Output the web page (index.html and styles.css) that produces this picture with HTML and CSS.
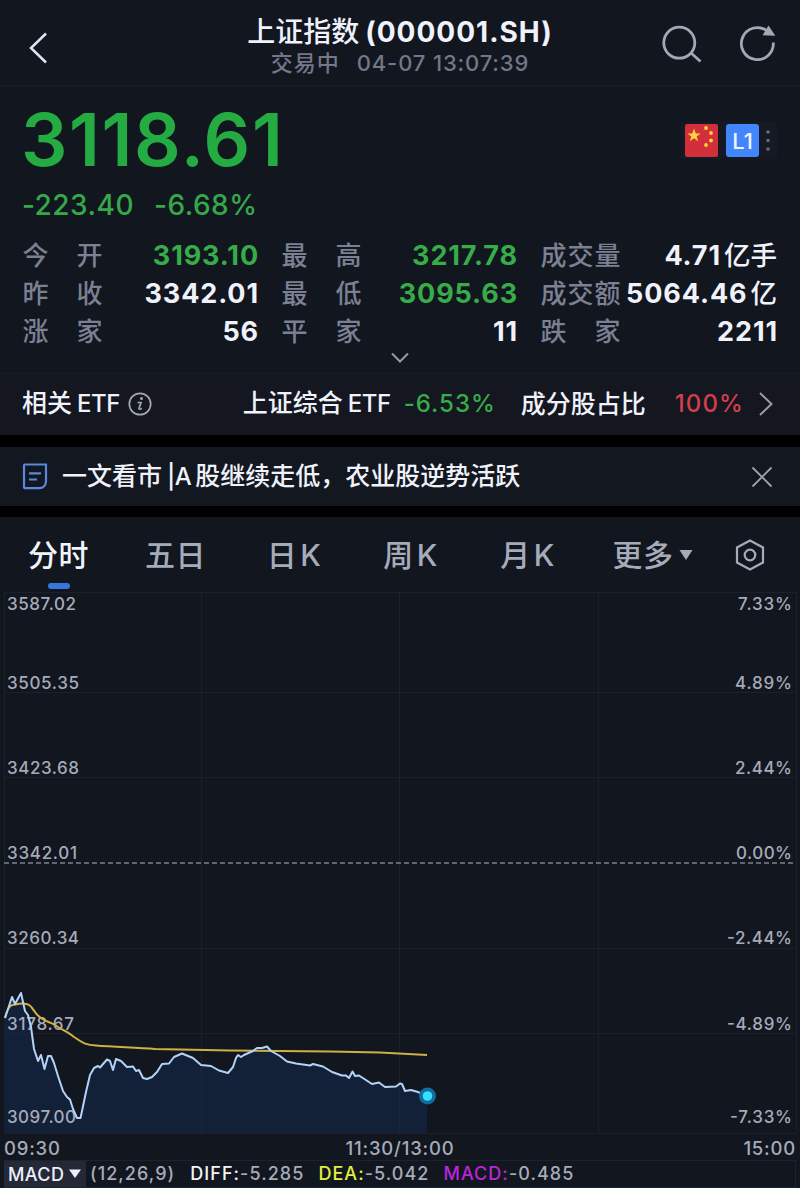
FILE: index.html
```html
<!DOCTYPE html>
<html lang="zh-CN">
<head>
<meta charset="utf-8">
<title>上证指数 (000001.SH)</title>
<link rel="stylesheet" href="styles.css">
</head>
<body>
<div class="app">
  <header class="topbar">
    <svg class="back" width="24" height="36" viewBox="0 0 24 36"><path d="M21 3.500 6 18 21 32.500"/></svg>
    <div class="heading">
      <h1 class="title"><span>上证指数</span><span class="code">(000001.SH)</span></h1>
      <p class="status"><span class="state">交易中</span><span class="stamp">04-07 13:07:39</span></p>
    </div>
    <div class="actions">
      <svg width="42" height="40" viewBox="0 0 42 40"><circle cx="19.300" cy="18.700" r="15.500"/><path d="M30.500 28.500 40.500 37.500"/></svg>
      <svg width="38" height="40" viewBox="0 0 38 40"><path d="M34.300 18.500A16 16 0 1 1 27.500 6.500"/><path class="solid" d="M29.500 3 34.800 10.800 25 10.500Z"/></svg>
    </div>
  </header>

  <section class="quote">
    <div class="price-row">
      <strong class="price">3118.61</strong>
      <div class="badges">
        <svg class="flag" width="33" height="33" viewBox="0 0 33 33">
          <rect width="33" height="33" rx="2"/>
          <path d="M9 4.500 10.800 9.400H15.600L11.700 12.400 13.200 17.200 9 14.300 4.800 17.200 6.300 12.400 2.400 9.400H7.200Z"/>
          <circle cx="21" cy="4" r="1.900"/><circle cx="26" cy="9" r="1.900"/><circle cx="26" cy="16.500" r="1.900"/><circle cx="21" cy="21" r="1.900"/>
        </svg>
        <span class="level">L1</span>
        <svg class="dots" width="6" height="24" viewBox="0 0 6 24"><circle cx="3" cy="3" r="1.800"/><circle cx="3" cy="11.500" r="1.800"/><circle cx="3" cy="20" r="1.800"/></svg>
      </div>
    </div>
    <p class="change"><span>-223.40</span><span>-6.68%</span></p>
    <dl class="stats">
      <div class="stat"><dt>今<i></i>开</dt><dd class="down">3193.10</dd></div>
      <div class="stat"><dt>最<i></i>高</dt><dd class="down">3217.78</dd></div>
      <div class="stat"><dt>成交量</dt><dd>4.71<span class="unit">亿手</span></dd></div>
      <div class="stat"><dt>昨<i></i>收</dt><dd>3342.01</dd></div>
      <div class="stat"><dt>最<i></i>低</dt><dd class="down">3095.63</dd></div>
      <div class="stat"><dt>成交额</dt><dd>5064.46<span class="unit">亿</span></dd></div>
      <div class="stat"><dt>涨<i></i>家</dt><dd>56</dd></div>
      <div class="stat"><dt>平<i></i>家</dt><dd>11</dd></div>
      <div class="stat"><dt>跌<i></i>家</dt><dd>2211</dd></div>
    </dl>
    <svg class="expand" width="20" height="12" viewBox="0 0 20 12"><path d="M2 1.500 10 9.500 18 1.500"/></svg>
  </section>

  <section class="etf">
    <span>相关<b class="lat">ETF</b></span>
    <svg class="info" width="24" height="24" viewBox="0 0 24 24"><circle cx="12" cy="12" r="10.700"/><path d="M9.500 10.500H13L11 16.500Q10.800 18 14 16.500"/><circle class="tittle" cx="13.500" cy="6.500" r="1.500"/></svg>
    <span class="fund">上证综合<b class="lat">ETF</b></span>
    <span class="fund-pct">-6.53%</span>
    <span class="share">成分股占比</span>
    <span class="share-pct">100%</span>
    <svg class="more" width="16" height="26" viewBox="0 0 16 26"><path d="M2 2 13.500 13 2 24"/></svg>
  </section>

  <section class="news">
    <svg class="doc" width="26" height="27" viewBox="0 0 26 27"><path d="M3 1.500H24V18.500Q23.500 25 17 25.200H3Q2 25.200 2 24.200V2.500Q2 1.500 3 1.500Z"/><path d="M7 10.300H19M7 16.500H15"/></svg>
    <span class="headline">一文看市<b class="lat">|A</b><span class="after">股继续走低，农业股逆势活跃</span></span>
    <svg class="close" width="22" height="22" viewBox="0 0 22 22"><path d="M1.500 1.500 20.500 20.500M20.500 1.500 1.500 20.500"/></svg>
  </section>

  <main class="panel">
    <nav class="tabs">
      <span class="tab active">分时</span>
      <span class="tab">五日</span>
      <span class="tab">日<b class="lat">K</b></span>
      <span class="tab">周<b class="lat">K</b></span>
      <span class="tab">月<b class="lat">K</b></span>
      <span class="tab more-tab">更多<svg width="14" height="12" viewBox="0 0 14 12"><path d="M.5 1H13.500L7 11Z"/></svg></span>
      <svg class="gear" width="30" height="32" viewBox="0 0 30 32"><path d="M15 1.500 28 8.500V23.500L15 30.500 2 23.500V8.500Z"/><circle cx="15" cy="16" r="5.300"/></svg>
    </nav>

    <svg class="chart" width="800" height="543" viewBox="0 592 800 543">
      <path class="grid" d="M4.500 592.500H796.500V1133.500H4.500ZM201.500 592V1133M399.500 592V1133M598.500 592V1133M4 692.500H796M4 777.500H796M4 948.500H796M4 1033.500H796"/>
      <path class="mid" d="M4 863H796"/>
      <path class="area" d="M5 1018 12 997 15 1004 21 993 25 1011 28 1015 31 1027 34 1049 38 1061 41 1055 44.500 1069 48 1056 51 1056 54 1063 58 1076 63 1091 67 1097 70 1099.500 73 1109 77 1118 80.500 1118 82 1111 86 1092 90 1075 94 1068 98 1066 100 1067.500 107 1059.500 110 1061 113 1070 116 1059 121 1061 127 1067 133 1066.500 136 1071 139 1070 143 1078 147 1079 152 1077 157 1072 162 1064 169 1063.500 174 1057 182 1053.500 193 1058 201 1065 211 1066 219 1070.500 228 1073 233 1067 236 1058 238 1055 241 1057 244 1055 253 1051 257 1048 262 1048 267 1046.500 271 1051 280 1056 287 1061.500 296 1063.500 310 1065.500 313 1064 323 1066.500 332 1072 342 1075.500 346 1075.500 349 1078 352.500 1071.500 355 1076 359 1075.500 372 1084 379 1082.500 385 1087 396 1086.500 400 1083.500 402 1084 405 1091 411 1090 418 1092 427 1096V1133H5Z"/>
      <g class="scale">
        <text x="7" y="610" textLength="69">3587.02</text>
        <text x="7" y="689" textLength="72">3505.35</text>
        <text x="7" y="774" textLength="72">3423.68</text>
        <text x="7" y="859" textLength="70">3342.01</text>
        <text x="7" y="944" textLength="72">3260.34</text>
        <text x="7" y="1029.500" textLength="67">3178.67</text>
        <text x="7" y="1123" textLength="69">3097.00</text>
      </g>
      <g class="scale right">
        <text x="738" y="610" textLength="54">7.33%</text>
        <text x="735" y="689" textLength="57">4.89%</text>
        <text x="735" y="774" textLength="57">2.44%</text>
        <text x="736" y="859" textLength="56">0.00%</text>
        <text x="727" y="944" textLength="65">-2.44%</text>
        <text x="727" y="1029.500" textLength="65">-4.89%</text>
        <text x="730" y="1123" textLength="62">-7.33%</text>
      </g>
      <path class="average" d="M5 1018C7 1010 9 1006 12 1005C17 1005 20 1002 28 1004.500C33 1006 34 1014 41 1018C46 1022 50 1022 55 1025C62 1030 68 1032 74 1037C82 1042 84 1045 96 1045.500C115 1047 135 1047.500 155 1049L230 1050.500 330 1051.500 380 1052.500 427 1055"/>
      <path class="line" d="M5 1018 12 997 15 1004 21 993 25 1011 28 1015 31 1027 34 1049 38 1061 41 1055 44.500 1069 48 1056 51 1056 54 1063 58 1076 63 1091 67 1097 70 1099.500 73 1109 77 1118 80.500 1118 82 1111 86 1092 90 1075 94 1068 98 1066 100 1067.500 107 1059.500 110 1061 113 1070 116 1059 121 1061 127 1067 133 1066.500 136 1071 139 1070 143 1078 147 1079 152 1077 157 1072 162 1064 169 1063.500 174 1057 182 1053.500 193 1058 201 1065 211 1066 219 1070.500 228 1073 233 1067 236 1058 238 1055 241 1057 244 1055 253 1051 257 1048 262 1048 267 1046.500 271 1051 280 1056 287 1061.500 296 1063.500 310 1065.500 313 1064 323 1066.500 332 1072 342 1075.500 346 1075.500 349 1078 352.500 1071.500 355 1076 359 1075.500 372 1084 379 1082.500 385 1087 396 1086.500 400 1083.500 402 1084 405 1091 411 1090 418 1092 427 1096"/>
      <circle class="halo" cx="427.500" cy="1096" r="8.500"/>
      <circle class="now" cx="427.500" cy="1096" r="4.800"/>
    </svg>

    <div class="times"><span>09:30</span><span class="noon">11:30/13:00</span><span class="end">15:00</span></div>
    <div class="macd">
      <span class="picker">MACD<svg width="12" height="10" viewBox="0 0 12 10"><path d="M0 .5H12L6 9Z"/></svg></span>
      <span class="params">(12,26,9)</span>
      <span class="diff"><b>DIFF:</b>-5.285</span>
      <span class="dea"><b>DEA:</b>-5.042</span>
      <span class="hist"><b>MACD:</b>-0.485</span>
    </div>
  </main>
</div>
</body>
</html>
```
FILE: styles.css
```css
* { box-sizing: border-box; }
html, body { margin: 0; background: #000; }
h1, p, dl, dd { margin: 0; }
svg { display: block; flex: none; fill: none; }
b { font-weight: inherit; }

.app {
  width: 800px;
  height: 1188px;
  overflow: hidden;
  color: #f0f2fb;
  font-family: Inter, "Noto Sans CJK SC", sans-serif;
  font-weight: 500;
  white-space: nowrap;
  display: flex;
  flex-direction: column;
}

.topbar {
  height: 86px;
  flex: none;
  background: #12161f;
  border-bottom: 1px solid #1b1f29;
  display: grid;
  grid-template-columns: 148px 1fr 148px;
}
.back { margin: 30px 0 0 25px; stroke: #dfe4f2; stroke-width: 2.5; }
.heading { display: flex; flex-direction: column; align-items: center; padding-top: 15px; }
.title { display: flex; font-size: 28px; line-height: 34px; font-weight: 700; }
.title > span:first-child { font-weight: 500; }
.code { margin-left: 6px; letter-spacing: 1px; }
.status { display: flex; color: #737789; font-size: 22px; line-height: 29px; }
.state { letter-spacing: 1px; }
.stamp { margin-left: 17px; letter-spacing: .85px; }
.actions { display: flex; gap: 37px; padding: 24px 0 0 8px; stroke: #a4a8b4; stroke-width: 2.8; }
.solid { fill: #a4a8b4; stroke-width: 1.6; }

.quote { height: 287px; flex: none; background: #12161f; padding: 0 23px; }
.price-row { height: 100px; display: flex; justify-content: space-between; }
.price { color: #24ac43; font-size: 73px; line-height: 108px; font-weight: 600; margin-left: -2px; letter-spacing: 1.6px; }
.badges { display: flex; align-items: center; height: 37px; margin-top: 36px; padding: 0 6px 0 4px; background: #151923; }
.flag rect { fill: #d22f3a; }
.flag { fill: #fbd13d; }
.level { width: 33px; height: 33px; margin-left: 8px; border-radius: 3px; background: #4386fb; color: #edf5ff; font-size: 22px; line-height: 34px; text-align: center; }
.dots { margin-left: 6px; fill: #686d79; }
.change { display: flex; gap: 20px; height: 50px; color: #35a94a; font-size: 28px; line-height: 39px; margin-left: -1px; letter-spacing: .5px; }
.stats { display: grid; grid-template-columns: 235px 235px 236px; column-gap: 24px; grid-auto-rows: 38px; margin: 0; }
.stat { display: flex; justify-content: space-between; line-height: 39px; }
.stat dt { display: flex; color: #7b8093; font-size: 26px; font-weight: 500; letter-spacing: 1px; margin-left: -.5px; }
.stat dt i { width: 27px; }
.stat dd { display: flex; font-size: 27px; font-weight: 700; letter-spacing: .9px; margin-right: -1px; }
.down { color: #36ad49; }
.unit { font-weight: 500; font-size: 26.5px; margin: 0 1px 0 3px; letter-spacing: 0; }
.expand { margin: 2px auto 0; stroke: #969aa6; stroke-width: 2; }

.etf { height: 62px; flex: none; background: #14171f; padding: 0 23px; border-top: 1px solid #181c26; display: flex; align-items: center; font-size: 25px; line-height: 60px; padding-bottom: 2px; }
.etf > span:first-child { margin-left: -1px; }
.lat { font-size: 24px; margin-left: 5px; letter-spacing: -.5px; }
.info { margin-left: 8px; stroke: #a3a7b1; stroke-width: 1.7; }
.tittle { fill: #a3a7b1; stroke: none; }
.fund { margin-left: 91px; }
.fund-pct { margin-left: 13px; color: #36ad49; font-size: 24px; font-weight: 450; letter-spacing: 1px; }
.share { margin-left: 25px; }
.share-pct { margin-left: auto; color: #d33e4b; font-size: 24px; font-weight: 450; letter-spacing: 1.1px; }
.more { margin: 0 3px 0 14px; stroke: #999da8; stroke-width: 2; }

.news { height: 59px; flex: none; margin: 12px 0 11px; background: #13171f; padding: 0 27px 0 22px; display: flex; align-items: center; font-size: 25px; line-height: 60px; }
.doc { stroke: #5b87df; stroke-width: 2.2; }
.headline { margin-left: 14px; }
.after { margin-left: 4px; }
.close { margin-left: auto; stroke: #9fa3ad; stroke-width: 1.8; }

.panel { flex: 1; background: #12161f; }
.tabs { height: 75px; display: grid; grid-template-columns: 117px 117px 119px 114px 120px 131px 1fr; align-items: start; color: #a6abba; font-size: 30px; line-height: 76px; }
.tab { display: flex; justify-content: center; letter-spacing: .6px; position: relative; }
.tab .lat { font-size: 30px; margin-left: 3px; }
.active { color: #f1f4fc; }
.active::after { content: ""; position: absolute; left: 48px; top: 66px; width: 22px; height: 6px; border-radius: 3px; background: #3975df; }
.more-tab { align-items: center; gap: 5px; }
.more-tab svg { fill: #a6abba; }
.gear { margin: 22px 0 0 17px; stroke: #a6abba; stroke-width: 2.2; }

.grid { stroke: #1b202a; stroke-width: 1; }
.mid { stroke: #7c818b; stroke-width: 1.3; stroke-dasharray: 5 3; }
.area { fill: rgba(20, 53, 103, .35); }
.scale { fill: #a6abba; font-size: 17px; font-weight: 450; }
.average { stroke: #cfb043; stroke-width: 2; }
.line { stroke: #b4d2f8; stroke-width: 2; stroke-linejoin: round; }
.halo { fill: #126c9c; }
.now { fill: #36dffb; }

.times { height: 25px; display: grid; grid-template-columns: 1fr 120px 1fr; padding: 0 4px; color: #a6abba; font-size: 18.5px; line-height: 27px; font-weight: 450; letter-spacing: .8px; }
.noon { text-align: center; }
.end { text-align: right; }
.macd { height: 28px; margin: 0 4px; border: solid #1d222c; border-width: 1px 1px 1px 0; display: flex; align-items: center; color: #a6abba; font-size: 18px; line-height: 25px; font-weight: 450; letter-spacing: 1.05px; }
.macd b { font-weight: 500; }
.macd > span { height: 27px; }
.macd .picker { display: flex; align-items: center; gap: 5px; width: 82px; height: 26px; padding-left: 4px; background: #242938; color: #edf0f8; font-weight: 500; letter-spacing: .4px; }
.picker svg { fill: #edf0f8; }
.params { margin-left: 4px; }
.diff { margin-left: 15px; }
.diff b { color: #f3f4f8; }
.dea { margin-left: 14px; }
.dea b { color: #e2f13d; }
.hist { margin-left: 14px; }
.hist b { color: #bd25dc; }
```
